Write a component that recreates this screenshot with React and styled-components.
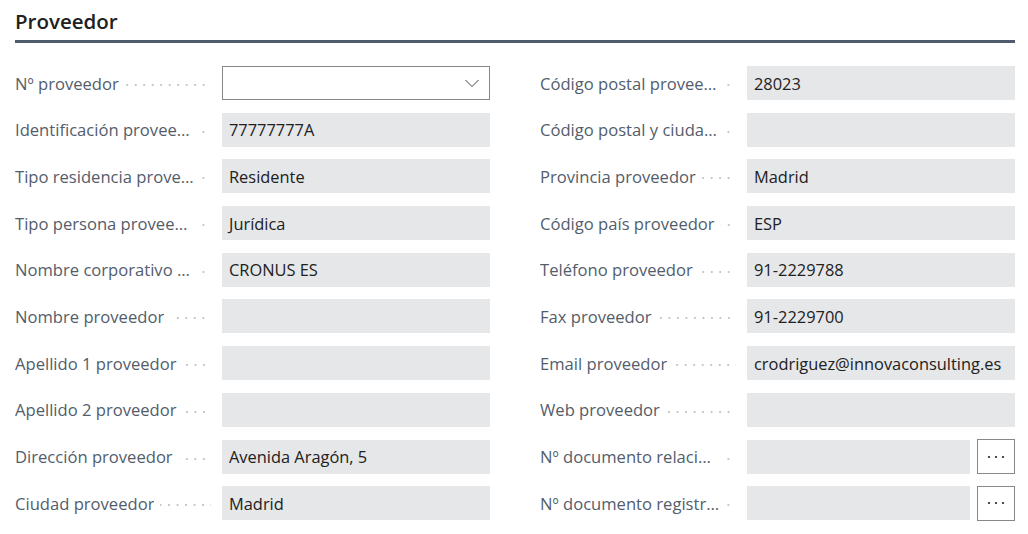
import * as React from "react";
import styled, { createGlobalStyle } from "styled-components";

// global reset
const GlobalStyle = createGlobalStyle`
  html, body {
    margin: 0;
    padding: 0;
    background: #ffffff;
  }
  body {
    font-family: "Open Sans", "Liberation Sans", sans-serif;
  }
`;

const Page = styled.div`
  width: 1028px;
  height: 534px;
  box-sizing: border-box;
  padding: 7px 13px 0 15px;
  overflow: hidden;
`;

const Title = styled.h2`
  margin: 0;
  font-size: 20.5px;
  line-height: 29px;
  font-weight: 600;
  color: #212121;
`;

const Divider = styled.div`
  height: 3px;
  margin-top: 4px;
  background: #505c6d;
`;

const Columns = styled.div`
  display: grid;
  grid-template-columns: 475px 475px;
  column-gap: 50px;
  margin-top: 23px;
`;

const Column = styled.div`
  display: flex;
  flex-direction: column;
  gap: 12.7px;
`;

const Row = styled.div`
  display: flex;
  align-items: center;
  height: 34px;
`;

const Label = styled.div`
  display: flex;
  align-items: center;
  width: 207px;
  flex: none;
  padding-right: 11px;
  box-sizing: border-box;
  font-size: 16.6px;
  color: #535d6b;
`;

const LabelText = styled.span`
  white-space: nowrap;
  overflow: hidden;
  text-overflow: ellipsis;
  max-width: 180px;
`;

const Leader = styled.span`
  flex: 1;
  min-width: 0;
  height: 2px;
  margin: 4px 0 0 6px;
  background-image: linear-gradient(to right, #c4c7cc 1.6px, transparent 1.6px);
  background-size: 8.5px 2px;
  background-repeat: repeat-x;
  background-position: right center;
`;

const Value = styled.div`
  flex: 1;
  height: 34px;
  display: flex;
  align-items: center;
  box-sizing: border-box;
  padding: 0 7px;
  font-size: 16.4px;
  color: #212121;
  white-space: nowrap;
  overflow: hidden;
  background: ${(p) => (p.$select ? "#ffffff" : "#e6e7e9")};
  border: ${(p) => (p.$select ? "1px solid #8a8886" : "none")};
`;

const Chevron = styled.svg`
  margin-left: auto;
  margin-right: 2px;
`;

const DotsButton = styled.button`
  flex: none;
  display: flex;
  align-items: center;
  justify-content: center;
  width: 38px;
  height: 35px;
  margin-left: 7px;
  padding: 0;
  border: 1px solid #8a8886;
  background: #ffffff;
`;

const leftFields = [
  { label: "Nº proveedor", value: "", select: true },
  { label: "Identificación proveedor", value: "77777777A" },
  { label: "Tipo residencia proveedor", value: "Residente" },
  { label: "Tipo persona proveedor", value: "Jurídica" },
  { label: "Nombre corporativo proveedor", value: "CRONUS ES" },
  { label: "Nombre proveedor", value: "" },
  { label: "Apellido 1 proveedor", value: "" },
  { label: "Apellido 2 proveedor", value: "" },
  { label: "Dirección proveedor", value: "Avenida Aragón, 5" },
  { label: "Ciudad proveedor", value: "Madrid" },
];

const rightFields = [
  { label: "Código postal proveedor", value: "28023" },
  { label: "Código postal y ciudad proveedor", value: "" },
  { label: "Provincia proveedor", value: "Madrid" },
  { label: "Código país proveedor", value: "ESP" },
  { label: "Teléfono proveedor", value: "91-2229788" },
  { label: "Fax proveedor", value: "91-2229700" },
  { label: "Email proveedor", value: "crodriguez@innovaconsulting.es" },
  { label: "Web proveedor", value: "" },
  { label: "Nº documento relacionado", value: "", lookup: true },
  { label: "Nº documento registrado", value: "", lookup: true },
];

const Field = ({ label, value, select, lookup }) => (
  <Row>
    <Label>
      <LabelText>{label}</LabelText>
      <Leader />
    </Label>
    <Value $select={select}>
      {value}
      {select && (
        <Chevron width="16" height="16" viewBox="0 0 16 16">
          <path d="M1.5 5 L8 11.5 L14.5 5" fill="none" stroke="#444" strokeWidth="1" />
        </Chevron>
      )}
    </Value>
    {lookup && (
      <DotsButton aria-label="Más opciones">
        <svg width="18" height="4" viewBox="0 0 18 4">
          <circle cx="2" cy="2" r="1.1" fill="#212121" />
          <circle cx="9" cy="2" r="1.1" fill="#212121" />
          <circle cx="16" cy="2" r="1.1" fill="#212121" />
        </svg>
      </DotsButton>
    )}
  </Row>
);

const App = () => {
  return (
    <Page>
      <GlobalStyle />
      <Title>Proveedor</Title>
      <Divider />
      <Columns>
        <Column>
          {leftFields.map((f) => (
            <Field key={f.label} {...f} />
          ))}
        </Column>
        <Column>
          {rightFields.map((f) => (
            <Field key={f.label} {...f} />
          ))}
        </Column>
      </Columns>
    </Page>
  );
};

export default App;
